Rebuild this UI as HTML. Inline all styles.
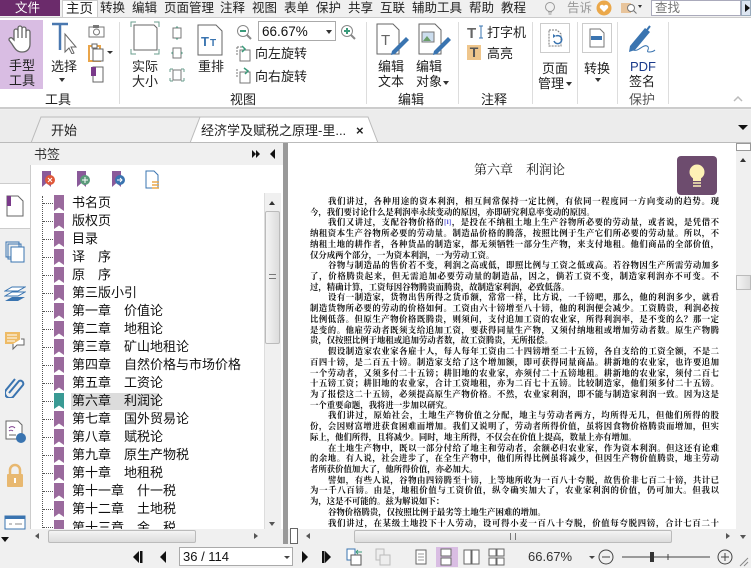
<!DOCTYPE html>
<html><head><meta charset="utf-8">
<style>
*{margin:0;padding:0;box-sizing:border-box}
body{width:751px;height:568px;overflow:hidden;position:relative;background:#f0f0f0;font-family:"Liberation Sans","Noto Sans CJK SC",sans-serif;color:#222}
.a{position:absolute}
.t{position:absolute;white-space:nowrap;font-size:13px;line-height:15px;color:#222}
.m{position:absolute;top:0;font-size:12.5px;line-height:17px;color:#222;white-space:nowrap}
.bm{position:absolute;left:72px;font-size:13px;line-height:16px;white-space:nowrap;color:#111}
.ri{position:absolute;left:54px;width:10px;height:16px;background:#9a6a9d;clip-path:polygon(0 0,100% 0,100% 100%,50% 78%,0 100%)}
.dl{position:absolute;left:43px;width:10px;border-top:1px dotted #555}
.doc{position:absolute;left:310px;width:409px;font-family:"Noto Serif CJK SC",serif;font-size:8.4px;line-height:10.73px;color:#111;font-weight:bold}
.doc div{height:10.73px;overflow:hidden;white-space:nowrap}
.j{text-align:justify;text-align-last:justify;text-justify:inter-character}
.i{padding-left:18px}
</style></head><body>
<!-- menu bar -->
<div class="a" style="left:0;top:0;width:751px;height:17px;background:#f0f0f0"></div>
<div class="a" style="left:0;top:0;width:60px;height:16px;background:#6b2b6b"></div>
<div class="m" style="left:15px;color:#fff">文件</div>
<div class="a" style="left:62px;top:0;width:36px;height:18px;background:#fff;border:1px solid #ccc;border-bottom:none"></div>
<div class="m" style="left:66px;font-size:13.5px">主页</div>
<div class="m" style="left:100px">转换</div>
<div class="m" style="left:132px">编辑</div>
<div class="m" style="left:164px">页面管理</div>
<div class="m" style="left:220px">注释</div>
<div class="m" style="left:252px">视图</div>
<div class="m" style="left:284px">表单</div>
<div class="m" style="left:316px">保护</div>
<div class="m" style="left:348px">共享</div>
<div class="m" style="left:380px">互联</div>
<div class="m" style="left:412px">辅助工具</div>
<div class="m" style="left:469px">帮助</div>
<div class="m" style="left:501px">教程</div>
<svg class="a" style="left:543px;top:1px" width="14" height="15"><circle cx="7" cy="6" r="4.5" fill="none" stroke="#999"/><path d="M5 11h4M5.5 13h3" stroke="#999"/></svg>
<div class="m" style="left:567px;color:#999">告诉</div>
<svg class="a" style="left:596px;top:0" width="16" height="16"><circle cx="8" cy="8" r="7.5" fill="#eba84a"/><path d="M8 12l-4-4a2 2 0 0 1 4-2a2 2 0 0 1 4 2z" fill="#fff"/></svg>
<svg class="a" style="left:620px;top:1px" width="22" height="14"><rect x="1" y="2" width="10" height="10" fill="#e8c49b"/><circle cx="11" cy="7" r="3.5" fill="#fff" stroke="#777"/><path d="M13.5 9.5l3 3" stroke="#777"/><path d="M18 4h4l-2 3z" fill="#333"/></svg>
<div class="a" style="left:651px;top:0;width:90px;height:16px;background:#fff;border:1px solid #aab"></div>
<div class="m" style="left:655px;color:#777">查找</div>
<div class="a" style="left:741px;top:0;width:10px;height:16px;background:#dde6f2;border:1px solid #9ab"></div>
<div class="a" style="left:745px;top:4px;border-left:5px solid #111;border-top:4px solid transparent;border-bottom:4px solid transparent"></div>

<!-- ribbon -->
<div class="a" style="left:0;top:17px;width:751px;height:92px;background:#fff;border-top:1px solid #ccc;border-bottom:2px solid #ccc"></div>
<div class="a" style="left:0;top:20px;width:43px;height:69px;background:#d9bde3"></div>
<svg class="a" style="left:8px;top:24px" width="28" height="30"><path d="M6 16V7a2 2 0 0 1 4 0v7V4a2 2 0 0 1 4 0v10V5a2 2 0 0 1 4 0v9V8a2 2 0 0 1 4 0v12c0 5-3 8-8 8s-7-3-10-8l-3-4a2 2 0 0 1 3-2z" fill="#fff" stroke="#666" stroke-width="1.3"/></svg>
<div class="t" style="left:9px;top:58px">手型</div>
<div class="t" style="left:9px;top:73px">工具</div>
<svg class="a" style="left:50px;top:22px" width="28" height="32"><path d="M2 2h16M10 2v26" stroke="#4a78b0" stroke-width="2.5"/><path d="M15 12v18l4-4 3 6 2-1-3-6h5z" fill="#fff" stroke="#666"/></svg>
<div class="t" style="left:51px;top:59px">选择</div>
<div class="a" style="left:59px;top:78px;border-top:4px solid #333;border-left:3px solid transparent;border-right:3px solid transparent"></div>
<svg class="a" style="left:88px;top:24px" width="18" height="14"><rect x="1" y="3" width="15" height="10" fill="none" stroke="#777"/><rect x="5" y="1" width="6" height="3" fill="#777"/><circle cx="8.5" cy="8" r="3" fill="none" stroke="#777"/></svg>
<svg class="a" style="left:88px;top:43px" width="26" height="19"><rect x="1" y="3" width="11" height="15" fill="none" stroke="#eaa54a" stroke-width="2"/><rect x="5" y="6" width="10" height="12" fill="#fff" stroke="#666"/><rect x="4" y="1" width="5" height="4" fill="#fff" stroke="#666"/><path d="M19 8h6l-3 3z" fill="#333"/></svg>
<svg class="a" style="left:90px;top:66px" width="14" height="17"><rect x="3" y="1" width="10" height="15" fill="#fff" stroke="#666"/><rect x="1" y="1" width="5" height="9" fill="#7a3a8a"/></svg>
<div class="t" style="left:45px;top:92px">工具</div>
<div class="a" style="left:119px;top:22px;width:1px;height:82px;background:#ddd"></div>
<svg class="a" style="left:130px;top:21px" width="30" height="34"><path d="M4 4h20l3 3v22H4z" fill="#fff" stroke="#666"/><path d="M1 6V1h5M24 1h5v5M1 28v5h5M29 28v5h-5" stroke="#6a9e8e" fill="none"/></svg>
<div class="t" style="left:132px;top:59px">实际</div>
<div class="t" style="left:132px;top:74px">大小</div>
<svg class="a" style="left:169px;top:26px" width="16" height="60"><rect x="4" y="2" width="8" height="10" fill="#fff" stroke="#777"/><path d="M8 0l-2 2h4zM8 14l-2-2h4z" fill="#6a9e8e"/><rect x="4" y="22" width="8" height="10" fill="#fff" stroke="#777"/><path d="M2 27l2-2v4zM14 27l-2-2v4z" fill="#6a9e8e"/><rect x="4" y="44" width="8" height="10" fill="#fff" stroke="#777"/><path d="M1 43h3M1 43v3M15 43h-3M15 43v3M1 55h3M1 55v-3M15 55h-3M15 55v-3" stroke="#6a9e8e"/></svg>
<svg class="a" style="left:197px;top:24px" width="26" height="32"><path d="M1 1h18l6 6v24H1z" fill="#fff" stroke="#666"/><text x="4" y="22" font-family="Liberation Sans" font-size="13" font-weight="bold" fill="#3a74b0">T</text><text x="13" y="22" font-family="Liberation Sans" font-size="10" font-weight="bold" fill="#3a74b0">T</text></svg>
<div class="t" style="left:198px;top:59px">重排</div>
<svg class="a" style="left:236px;top:24px" width="16" height="16"><circle cx="7" cy="7" r="5.5" fill="none" stroke="#888"/><path d="M4 7h6" stroke="#3a9a7a" stroke-width="2"/><path d="M11 11l4 4" stroke="#888" stroke-width="2"/></svg>
<div class="a" style="left:258px;top:21px;width:78px;height:20px;border:1px solid #aaa;background:#fff"></div>
<div class="t" style="left:262px;top:24px;font-size:13.5px;color:#111">66.67%</div>
<div class="a" style="left:326px;top:30px;border-top:4px solid #333;border-left:3px solid transparent;border-right:3px solid transparent"></div>
<svg class="a" style="left:340px;top:24px" width="16" height="16"><circle cx="7" cy="7" r="5.5" fill="none" stroke="#888"/><path d="M4 7h6M7 4v6" stroke="#3a9a7a" stroke-width="2"/><path d="M11 11l4 4" stroke="#888" stroke-width="2"/></svg>
<svg class="a" style="left:236px;top:45px" width="16" height="17"><path d="M4 5h10v11H4z" fill="#fff" stroke="#777"/><path d="M1 2h6M1 2v8" stroke="#777" stroke-dasharray="2 1"/><path d="M6 1l3 3-3 3" fill="none" stroke="#3a9a7a" stroke-width="1.5"/></svg>
<div class="t" style="left:255px;top:46px">向左旋转</div>
<svg class="a" style="left:236px;top:67px" width="16" height="17"><path d="M4 5h10v11H4z" fill="#fff" stroke="#777"/><path d="M1 2v8" stroke="#777" stroke-dasharray="2 1"/><path d="M8 1l4 3-3 3" fill="none" stroke="#3a9a7a" stroke-width="1.5"/></svg>
<div class="t" style="left:255px;top:69px">向右旋转</div>
<div class="t" style="left:230px;top:92px">视图</div>
<div class="a" style="left:366px;top:22px;width:1px;height:82px;background:#ddd"></div>
<svg class="a" style="left:376px;top:23px" width="34" height="32"><path d="M1 1h16l6 6v24H1z" fill="#fff" stroke="#666"/><text x="5" y="22" font-family="Liberation Sans" font-size="15" fill="#666">T</text><path d="M16 28l14-14 3 3-14 14-4 1z" fill="#3a74b0"/></svg>
<div class="t" style="left:378px;top:59px">编辑</div>
<div class="t" style="left:378px;top:74px">文本</div>
<svg class="a" style="left:418px;top:23px" width="34" height="32"><path d="M1 1h16l6 6v24H1z" fill="#fff" stroke="#666"/><rect x="4" y="9" width="12" height="10" fill="#cde" stroke="#777"/><path d="M5 18l4-5 4 5z" fill="#6a9e6a"/><path d="M16 28l14-14 3 3-14 14-4 1z" fill="#3a74b0"/></svg>
<div class="t" style="left:416px;top:59px">编辑</div>
<div class="t" style="left:416px;top:74px">对象</div>
<div class="a" style="left:443px;top:81px;border-top:4px solid #333;border-left:3px solid transparent;border-right:3px solid transparent"></div>
<div class="t" style="left:398px;top:92px">编辑</div>
<div class="a" style="left:458px;top:22px;width:1px;height:82px;background:#ddd"></div>
<svg class="a" style="left:467px;top:24px" width="18" height="16"><text x="0" y="14" font-family="Liberation Sans" font-size="15" font-weight="bold" fill="#666">T</text><path d="M12 2h4M14 2v12M12 14h4" stroke="#3a74b0"/></svg>
<div class="t" style="left:487px;top:25px">打字机</div>
<div class="a" style="left:467px;top:45px;width:14px;height:15px;background:#efc68c;color:#555;font:bold 14px/15px 'Liberation Sans';text-align:center">T</div>
<div class="t" style="left:487px;top:46px">高亮</div>
<div class="t" style="left:481px;top:92px">注释</div>
<div class="a" style="left:532px;top:22px;width:1px;height:82px;background:#ddd"></div>
<div class="a" style="left:540px;top:23px;width:30px;height:30px;border:1px solid #ccc"></div>
<svg class="a" style="left:547px;top:29px" width="16" height="18"><path d="M2 1h8l4 4v12H2z" fill="none" stroke="#777" stroke-dasharray="2 1"/><path d="M7 12a4 4 0 1 0 2-5" fill="none" stroke="#3a74b0" stroke-width="1.5"/><path d="M6 5l3 2-3 2z" fill="#3a74b0"/></svg>
<div class="t" style="left:542px;top:61px">页面</div>
<div class="t" style="left:538px;top:76px">管理</div>
<div class="a" style="left:566px;top:82px;border-top:4px solid #333;border-left:3px solid transparent;border-right:3px solid transparent"></div>
<div class="a" style="left:577px;top:22px;width:1px;height:82px;background:#ddd"></div>
<div class="a" style="left:582px;top:23px;width:30px;height:30px;border:1px solid #ccc"></div>
<svg class="a" style="left:589px;top:28px" width="16" height="20"><path d="M1 1h10l4 4v14H1z" fill="#fff" stroke="#777"/><rect x="2" y="8" width="11" height="4" fill="#3a74b0"/></svg>
<div class="t" style="left:584px;top:61px">转换</div>
<div class="a" style="left:595px;top:78px;border-top:4px solid #333;border-left:3px solid transparent;border-right:3px solid transparent"></div>
<div class="a" style="left:617px;top:22px;width:1px;height:82px;background:#ddd"></div>
<svg class="a" style="left:627px;top:24px" width="30" height="30"><path d="M3 22l15-18 5 4-15 18-6 2z" fill="#3a74b0"/><path d="M20 6l3-4" stroke="#3a74b0" stroke-width="2"/><path d="M6 26c6 2 10-6 14-4s-2 6 2 6 6-2 6-2" fill="none" stroke="#3a74b0"/></svg>
<div class="t" style="left:630px;top:59px;color:#1a3a8a;font-family:'Liberation Sans',sans-serif">PDF</div>
<div class="t" style="left:629px;top:74px">签名</div>
<div class="t" style="left:629px;top:92px;color:#555">保护</div>
<div class="a" style="left:668px;top:22px;width:1px;height:82px;background:#ddd"></div>
<svg class="a" style="left:733px;top:95px" width="10" height="7"><path d="M1 6l4-4 4 4" fill="none" stroke="#bbb" stroke-width="1.5"/></svg>

<!-- tab bar -->
<div class="a" style="left:0;top:110px;width:751px;height:33px;background:#ececec"></div>
<svg class="a" style="left:30px;top:116px" width="350" height="28"><path d="M1 27l10-26h172l8 26" fill="#eee" stroke="#bbb"/><path d="M160 27l10-26h168l10 26z" fill="#fff" stroke="#bbb"/></svg>
<div class="t" style="left:51px;top:123px">开始</div>
<div class="t" style="left:201px;top:123px">经济学及赋税之原理-里...</div>
<div class="t" style="left:356px;top:123px;font-weight:bold">×</div>
<div class="a" style="left:738px;top:125px;border-top:5px solid #111;border-left:5px solid transparent;border-right:5px solid transparent"></div>
<div class="a" style="left:0;top:142px;width:751px;height:1px;background:#bbb"></div>

<!-- left icon column -->
<div class="a" style="left:0;top:143px;width:30px;height:401px;background:#f0f0f0"></div>
<div class="a" style="left:0;top:183px;width:30px;height:46px;background:#fff;border-top:1px solid #ccc;border-bottom:1px solid #ccc"></div>
<svg class="a" style="left:6px;top:195px" width="18" height="22"><path d="M1 1h11l5 5v15H1z" fill="#fff" stroke="#666"/><rect x="1" y="1" width="4" height="10" fill="#7a3a8a"/></svg>
<svg class="a" style="left:5px;top:241px" width="20" height="22"><rect x="1" y="1" width="13" height="15" fill="none" stroke="#3a74b0"/><rect x="3" y="3" width="13" height="15" fill="none" stroke="#3a74b0"/><rect x="6" y="6" width="13" height="15" fill="#fff" stroke="#3a74b0"/></svg>
<svg class="a" style="left:4px;top:286px" width="22" height="20"><path d="M1 5l7-4h13l-7 4z" fill="#fff" stroke="#3a74b0"/><path d="M1 10l7-4h13l-7 4z" fill="#fff" stroke="#3a74b0"/><path d="M1 15l7-4h13l-7 4z" fill="#3a74b0"/></svg>
<svg class="a" style="left:4px;top:331px" width="22" height="20"><rect x="1" y="1" width="15" height="12" fill="#eebb66"/><path d="M3 4h10M3 7h10M3 10h8" stroke="#fff"/><path d="M9 13v5l4-4h7V8h-3" fill="#fff" stroke="#666"/></svg>
<svg class="a" style="left:5px;top:376px" width="20" height="22"><path d="M4 17l10-12a3 3 0 0 1 4 4L8 21a5 5 0 0 1-7-7l9-11" fill="none" stroke="#3a74b0" stroke-width="2"/></svg>
<svg class="a" style="left:5px;top:420px" width="22" height="24"><path d="M1 1h12l4 4v14H1z" fill="#fff" stroke="#666"/><path d="M4 8a4 4 0 0 1 6 0M4 11a3 3 0 0 1 4 0" stroke="#7a3a8a" fill="none"/><path d="M4 15h7" stroke="#666"/><circle cx="16" cy="18" r="5" fill="#3a74b0"/></svg>
<svg class="a" style="left:5px;top:463px" width="20" height="26"><path d="M5 11V7a5 5 0 0 1 10 0v4" fill="none" stroke="#e8b870" stroke-width="2.5"/><rect x="2" y="11" width="16" height="13" rx="1" fill="#e8b870"/><rect x="9" y="15" width="2" height="5" fill="#fff"/></svg>
<svg class="a" style="left:4px;top:515px" width="22" height="15"><rect x="1" y="1" width="20" height="13" fill="#fff" stroke="#3a74b0"/><rect x="1" y="1" width="20" height="3" fill="#3a74b0"/><path d="M5 9h3M11 9h7" stroke="#888"/></svg>
<div class="a" style="left:1px;top:537px;border-top:5px solid #111;border-left:4px solid transparent;border-right:4px solid transparent"></div>

<!-- bookmark panel -->
<div class="a" style="left:30px;top:143px;width:253px;height:22px;background:#f0f0f0"></div>
<div class="t" style="left:34px;top:147px;color:#333">书签</div>
<div class="a" style="left:252px;top:150px;border-left:4px solid #111;border-top:4px solid transparent;border-bottom:4px solid transparent"></div>
<div class="a" style="left:256px;top:150px;border-left:4px solid #111;border-top:4px solid transparent;border-bottom:4px solid transparent"></div>
<div class="a" style="left:270px;top:149px;border-right:5px solid #111;border-top:5px solid transparent;border-bottom:5px solid transparent"></div>
<div class="a" style="left:30px;top:165px;width:253px;height:365px;background:#fff;border-left:1px solid #ccc"></div>
<svg class="a" style="left:40px;top:170px" width="130" height="20"><path d="M2 1h9v16l-4.5-4L2 17z" fill="#8a5a9a"/><circle cx="10" cy="10" r="5" fill="#e0583a"/><path d="M8 8l4 4M12 8l-4 4" stroke="#fff"/><path d="M37 1h9v16l-4.5-4L37 17z" fill="#8a5a9a"/><circle cx="45" cy="10" r="5" fill="#5a9a7a"/><path d="M42 10h6M45 7v6" stroke="#fff"/><path d="M72 1h9v16l-4.5-4L72 17z" fill="#8a5a9a"/><circle cx="80" cy="10" r="5" fill="#3a74b0"/><path d="M77 10h5M80 8l2 2-2 2" stroke="#fff" fill="none"/><path d="M106 1h8l4 4v13h-12z" fill="#fff" stroke="#3a74b0"/><path d="M112 12h7M112 15h7M112 18h7" stroke="#eba84a" stroke-width="1.5"/></svg>
<div class="a" style="left:42px;top:196px;height:334px;border-left:1px dotted #555"></div>
<div class="a" style="left:71px;top:393px;width:88px;height:17px;background:#dcdcdc"></div>
<div class="dl" style="top:203px"></div><div class="ri" style="top:195px"></div><div class="bm" style="top:195px">书名页</div>
<div class="dl" style="top:221px"></div><div class="ri" style="top:213px"></div><div class="bm" style="top:213px">版权页</div>
<div class="dl" style="top:239px"></div><div class="ri" style="top:231px"></div><div class="bm" style="top:231px">目录</div>
<div class="dl" style="top:257px"></div><div class="ri" style="top:249px"></div><div class="bm" style="top:249px">译　序</div>
<div class="dl" style="top:275px"></div><div class="ri" style="top:267px"></div><div class="bm" style="top:267px">原　序</div>
<div class="dl" style="top:293px"></div><div class="ri" style="top:285px"></div><div class="bm" style="top:285px">第三版小引</div>
<div class="dl" style="top:311px"></div><div class="ri" style="top:303px"></div><div class="bm" style="top:303px">第一章　价值论</div>
<div class="dl" style="top:329px"></div><div class="ri" style="top:321px"></div><div class="bm" style="top:321px">第二章　地租论</div>
<div class="dl" style="top:347px"></div><div class="ri" style="top:339px"></div><div class="bm" style="top:339px">第三章　矿山地租论</div>
<div class="dl" style="top:365px"></div><div class="ri" style="top:357px"></div><div class="bm" style="top:357px">第四章　自然价格与市场价格</div>
<div class="dl" style="top:383px"></div><div class="ri" style="top:375px"></div><div class="bm" style="top:375px">第五章　工资论</div>
<div class="dl" style="top:401px"></div><div class="ri" style="top:393px;background:#3a9a94"></div><div class="bm" style="top:393px">第六章　利润论</div>
<div class="dl" style="top:419px"></div><div class="ri" style="top:411px"></div><div class="bm" style="top:411px">第七章　国外贸易论</div>
<div class="dl" style="top:437px"></div><div class="ri" style="top:429px"></div><div class="bm" style="top:429px">第八章　赋税论</div>
<div class="dl" style="top:455px"></div><div class="ri" style="top:447px"></div><div class="bm" style="top:447px">第九章　原生产物税</div>
<div class="dl" style="top:473px"></div><div class="ri" style="top:465px"></div><div class="bm" style="top:465px">第十章　地租税</div>
<div class="dl" style="top:491px"></div><div class="ri" style="top:483px"></div><div class="bm" style="top:483px">第十一章　什一税</div>
<div class="dl" style="top:509px"></div><div class="ri" style="top:501px"></div><div class="bm" style="top:501px">第十二章　土地税</div>
<div class="a" style="left:30px;top:519px;width:234px;height:11px;overflow:hidden"><div class="dl" style="left:13px;top:8px"></div><div class="ri" style="left:24px;top:1px"></div><div class="bm" style="left:42px;top:1px">第十三章　金　税</div></div>
<!-- bm vscroll -->
<div class="a" style="left:264px;top:193px;width:17px;height:337px;background:#f0f0f0;border-left:1px solid #ddd"></div>
<div class="a" style="left:269px;top:201px;border-bottom:4px solid #333;border-left:3px solid transparent;border-right:3px solid transparent"></div>
<div class="a" style="left:265px;top:211px;width:15px;height:133px;background:linear-gradient(90deg,#f4f4f4,#dcdcdc);border:1px solid #bbb;border-radius:2px"></div>
<div class="a" style="left:269px;top:274px;width:7px;height:5px;border-top:1px solid #777;border-bottom:1px solid #777"></div>
<div class="a" style="left:269px;top:522px;border-top:4px solid #555;border-left:3px solid transparent;border-right:3px solid transparent"></div>
<!-- bm hscroll -->
<div class="a" style="left:30px;top:529px;width:253px;height:15px;background:#f0f0f0"></div>
<div class="a" style="left:35px;top:533px;border-right:4px solid #555;border-top:3px solid transparent;border-bottom:3px solid transparent"></div>
<div class="a" style="left:48px;top:530px;width:148px;height:13px;background:linear-gradient(#f4f4f4,#dcdcdc);border:1px solid #bbb;border-radius:2px"></div>
<div class="a" style="left:254px;top:533px;border-left:4px solid #555;border-top:3px solid transparent;border-bottom:3px solid transparent"></div>
<div class="a" style="left:283px;top:143px;width:5px;height:401px;background:#999"></div>

<!-- document -->
<div class="a" style="left:288px;top:143px;width:448px;height:386px;background:#fff"></div>
<div class="a" style="left:474px;top:162px;font-family:'Liberation Serif','Noto Serif CJK SC',serif;font-size:13px;line-height:16px;color:#222;white-space:nowrap">第六章　利润论</div>
<div class="a" style="left:677px;top:156px;width:40px;height:39px;background:#6d4c6e;border-radius:4px"></div>
<svg class="a" style="left:687px;top:163px" width="20" height="28"><circle cx="10" cy="9" r="7.5" fill="#fdf1b5"/><path d="M6 14h8v4H6z" fill="#fdf1b5"/><path d="M6 20h8M6 23h8" stroke="#fdf1b5" stroke-width="1.5"/></svg>
<div class="doc" style="top:196px">
<div class="j i">我们讲过，各种用途的资本利润，相互间常保持一定比例，有依同一程度同一方向变动的趋势。现</div>
<div>今，我们要讨论什么是利润率永续变动的原因，亦即研究利息率变动的原因。</div>
<div class="j i">我们又讲过，支配谷物价格的<span style="color:#22c;font-size:6px;vertical-align:top">[1]</span>，是投在不纳租土地上生产谷物所必要的劳动量，或者说，是凭借不</div>
<div class="j">纳租资本生产谷物所必要的劳动量。制造品价格的腾落，按照比例于生产它们所必要的劳动量。所以，不</div>
<div class="j">纳租土地的耕作者，各种货品的制造家，都无须牺牲一部分生产物，来支付地租。他们商品的全部价值，</div>
<div>仅分成两个部分，一为资本利润，一为劳动工资。</div>
<div class="j i">谷物与制造品的售价若不变，利润之高或低，即照比例与工资之低或高。若谷物因生产所需劳动加多</div>
<div class="j">了，价格腾贵起来，但无需追加必要劳动量的制造品，因之，倘若工资不变，制造家利润亦不可变。不</div>
<div>过，精确计算，工资每因谷物腾贵而腾贵，故制造家利润，必致低落。</div>
<div class="j i">设有一制造家，货物出售所得之货币额，常常一样，比方说，一千镑吧，那么，他的利润多少，就看</div>
<div class="j">制造货物所必要的劳动的价格如何。工资由六十镑增至八十镑，他的利润便会减少。工资腾贵，利润必按</div>
<div class="j">比例低落。但原生产物价格既腾贵，则须问，支付追加工资的农业家，所得利润率，是不变的么？那一定</div>
<div class="j">是变的。他雇劳动者既须支给追加工资，要获得同量生产物，又须付纳地租或增加劳动者数。原生产物腾</div>
<div>贵，仅按照比例于地租或追加劳动者数，故工资腾贵，无所报偿。</div>
<div class="j i">假设制造家农业家各雇十人，每人每年工资由二十四镑增至二十五镑，各自支给的工资全额，不是二</div>
<div class="j">百四十镑，是二百五十镑。制造家支给了这个增加额，即可获得同量商品。耕新地的农业家，也许要追加</div>
<div class="j">一个劳动者，又须多付二十五镑；耕旧地的农业家，亦须付二十五镑地租。耕新地的农业家，须付二百七</div>
<div class="j">十五镑工资；耕旧地的农业家，合计工资地租，亦为二百七十五镑。比较制造家，他们须多付二十五镑。</div>
<div class="j">为了报偿这二十五镑，必须提高原生产物价格。不然，农业家利润，即不能与制造家利润一致。因为这是</div>
<div>一个重要命题，我将进一步加以研究。</div>
<div class="j i">我们讲过，原始社会，土地生产物价值之分配，地主与劳动者两方，均所得无几，但他们所得的股</div>
<div class="j">份，会因财富增进获食困难而增加。我们又说明了，劳动者所得价值，虽将因食物价格腾贵而增加，但实</div>
<div>际上，他们所得，且将减少。同时，地主所得，不仅会在价值上提高，数量上亦有增加。</div>
<div class="j i">在土地生产物中，既以一部分付给了地主和劳动者，余额必归农业家，作为资本利润。但这还有论难</div>
<div class="j">的余地。有人说，社会进步了，在全生产物中，他们所得比例虽将减少，但因生产物价值腾贵，地主劳动</div>
<div>者所获价值加大了，他所得价值，亦必加大。</div>
<div class="j i">譬如，有些人说，谷物由四镑腾至十镑，上等地所收为一百八十夸脱，故售价非七百二十镑，共计已</div>
<div class="j">为一千八百镑。由是，地租价值与工资价值，纵令确实加大了，农业家利润的价值，仍可加大。但我以</div>
<div>为，这是不可能的。兹为解说如下：</div>
<div class="i">谷物价格腾贵，仅按照比例于最劣等土地生产困难的增加。</div>
<div class="j i">我们讲过，在某级土地投下十人劳动，设可得小麦一百八十夸脱，价值每夸脱四镑，合计七百二十</div>
</div>
<!-- doc vscroll -->
<div class="a" style="left:736px;top:143px;width:15px;height:386px;background:#f0f0f0"></div>
<div class="a" style="left:736px;top:143px;width:15px;height:8px;border:1px solid #999;background:#fff"></div>
<div class="a" style="left:740px;top:158px;border-bottom:4px solid #333;border-left:3px solid transparent;border-right:3px solid transparent"></div>
<div class="a" style="left:736px;top:275px;width:15px;height:15px;background:linear-gradient(90deg,#f4f4f4,#dcdcdc);border:1px solid #bbb"></div>
<!-- doc hscroll -->
<div class="a" style="left:288px;top:529px;width:463px;height:15px;background:#f0f0f0"></div>
<div class="a" style="left:290px;top:528px;width:8px;height:16px;border:1px solid #666;background:#fff"></div>
<div class="a" style="left:306px;top:533px;border-right:4px solid #555;border-top:3px solid transparent;border-bottom:3px solid transparent"></div>
<div class="a" style="left:354px;top:530px;width:318px;height:13px;background:linear-gradient(#f4f4f4,#dcdcdc);border:1px solid #bbb;border-radius:2px"></div>
<div class="a" style="left:510px;top:533px;width:6px;height:7px;border-left:1px solid #777;border-right:1px solid #777"></div>
<div class="a" style="left:726px;top:533px;border-left:4px solid #555;border-top:3px solid transparent;border-bottom:3px solid transparent"></div>
<div class="a" style="left:740px;top:535px;border-top:4px solid #555;border-left:3px solid transparent;border-right:3px solid transparent"></div>

<!-- status bar -->
<div class="a" style="left:0;top:544px;width:751px;height:24px;background:#f0f0f0"></div>
<svg class="a" style="left:132px;top:549px" width="50" height="16"><path d="M7 2v12l-6-6z" fill="#111"/><rect x="8" y="2" width="2.5" height="12" fill="#111"/><path d="M34 2v12l-6-6z" fill="#111"/></svg>
<div class="a" style="left:179px;top:547px;width:114px;height:19px;background:#fff;border:1px solid #aaa"></div>
<div class="a" style="left:183px;top:549px;font-size:13px;line-height:15px;white-space:nowrap;color:#111">36 / 114</div>
<div class="a" style="left:284px;top:556px;border-top:3px solid #444;border-left:3px solid transparent;border-right:3px solid transparent"></div>
<svg class="a" style="left:300px;top:549px" width="40" height="16"><path d="M2 2v12l6-6z" fill="#111"/><path d="M25 2v12l6-6z" fill="#111"/><rect x="22" y="2" width="2.5" height="12" fill="#111"/></svg>
<svg class="a" style="left:346px;top:547px" width="50" height="19"><rect x="1" y="2" width="8" height="11" fill="#fff" stroke="#3a74b0"/><rect x="5" y="8" width="10" height="10" fill="#fff" stroke="#555"/><path d="M10 5h6M10 5l2-2M10 5l2 2" stroke="#3a9a7a"/><rect x="30" y="2" width="8" height="11" fill="#eee" stroke="#bbb"/><rect x="34" y="8" width="10" height="10" fill="#eee" stroke="#bbb"/></svg>
<div class="a" style="left:436px;top:547px;width:22px;height:20px;background:#d9bde3"></div>
<svg class="a" style="left:412px;top:548px" width="96" height="18"><rect x="4" y="2" width="10" height="14" fill="#fff" stroke="#666"/><path d="M6 6h6M6 9h6M6 12h6" stroke="#999"/><rect x="29" y="1" width="10" height="7" fill="#fff" stroke="#666"/><rect x="29" y="10" width="10" height="7" fill="#fff" stroke="#666"/><rect x="52" y="2" width="7" height="14" fill="#fff" stroke="#666"/><rect x="60" y="2" width="7" height="14" fill="#fff" stroke="#666"/><rect x="77" y="1" width="7" height="7" fill="#fff" stroke="#666"/><rect x="85" y="1" width="7" height="7" fill="#fff" stroke="#666"/><rect x="77" y="10" width="7" height="7" fill="#fff" stroke="#666"/><rect x="85" y="10" width="7" height="7" fill="#fff" stroke="#666"/></svg>
<div class="a" style="left:528px;top:549px;font-size:13px;line-height:15px;color:#333">66.67%</div>
<div class="a" style="left:589px;top:556px;border-top:3px solid #444;border-left:3px solid transparent;border-right:3px solid transparent"></div>
<svg class="a" style="left:596px;top:546px" width="155" height="22"><circle cx="10" cy="11" r="7" fill="none" stroke="#444"/><path d="M6 11h8" stroke="#444"/><path d="M26 11h88" stroke="#444"/><rect x="54" y="6" width="4" height="10" fill="#333"/><path d="M72 8v6" stroke="#444"/><circle cx="129" cy="11" r="7" fill="none" stroke="#444"/><path d="M125 11h8M129 7v8" stroke="#444"/><path d="M144 20l8-8M148 20l4-4" stroke="#888"/></svg>
</body></html>
